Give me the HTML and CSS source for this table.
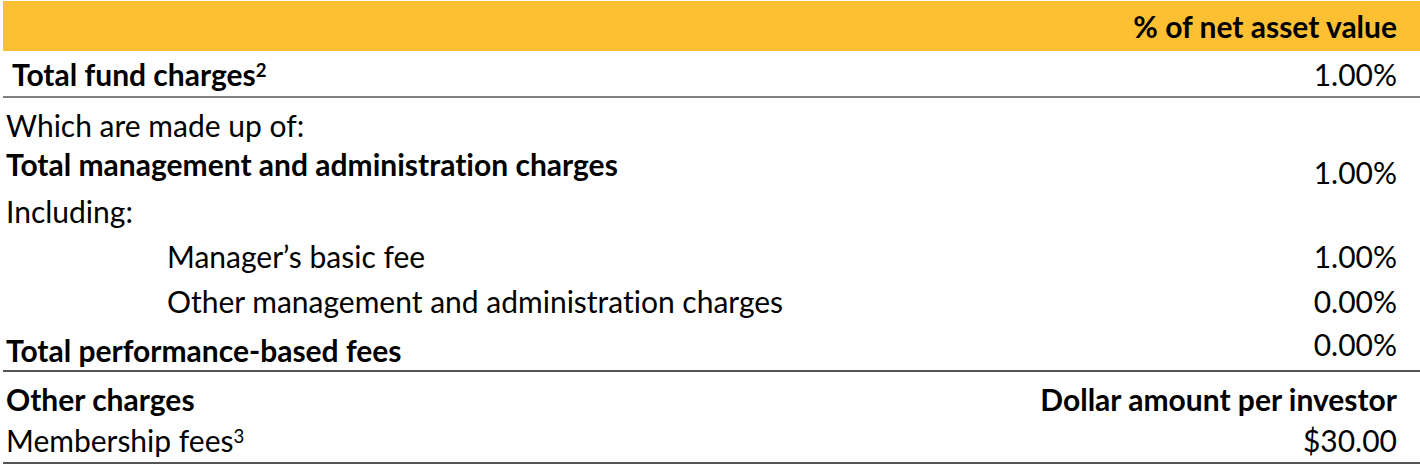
FILE: index.html
```html
<!DOCTYPE html>
<html lang="en">
<head>
<meta charset="utf-8">
<title>Fund charges</title>
<link rel="stylesheet" href="styles.css">
</head>
<body>
<div class="fees">
  <div class="row head">
    <div class="label"></div>
    <div class="value">% of net asset value</div>
  </div>
  <div class="row r-total rule-thick">
    <div class="label bold indent-space">Total fund charges<sup>2</sup></div>
    <div class="value">1.00%</div>
  </div>
  <div class="row r-which">
    <div class="label">Which are made up of:</div>
    <div class="value"></div>
  </div>
  <div class="row r-mgmt">
    <div class="label bold">Total management and administration charges</div>
    <div class="value">1.00%</div>
  </div>
  <div class="row r-incl">
    <div class="label">Including:</div>
    <div class="value"></div>
  </div>
  <div class="row r-basic">
    <div class="label sub">Manager’s basic fee</div>
    <div class="value">1.00%</div>
  </div>
  <div class="row r-other">
    <div class="label sub">Other management and administration charges</div>
    <div class="value">0.00%</div>
  </div>
  <div class="row r-perf rule">
    <div class="label bold">Total performance-based fees</div>
    <div class="value">0.00%</div>
  </div>
  <div class="row r-oc">
    <div class="label bold">Other charges</div>
    <div class="value bold">Dollar amount per investor</div>
  </div>
  <div class="row r-member rule">
    <div class="label">Membership fees<sup>3</sup></div>
    <div class="value">$30.00</div>
  </div>
</div>
</body>
</html>
```

FILE: styles.css
```css
html, body {
  margin: 0;
  padding: 0;
  background: #ffffff;
}

body {
  font-family: "Lato", "Open Sans", sans-serif;
  font-size: 30px;
  color: #000000;
  font-variant-ligatures: none;
  -webkit-font-smoothing: antialiased;
}

.fees {
  margin: 1px 0 0 3px;
  display: flex;
  flex-direction: column;
}

.row {
  display: grid;
  grid-template-columns: 1fr auto;
  padding-right: 23px;
  line-height: 36px;
  box-sizing: border-box;
}

.label {
  padding-left: 3px;
  white-space: nowrap;
}

.value {
  text-align: right;
  white-space: nowrap;
}

.bold {
  font-weight: 700;
}

.indent-space {
  padding-left: 9px;
}

.sub {
  padding-left: 164px;
}

sup {
  font-size: 0.62em;
  line-height: 0;
  vertical-align: 0.5em;
}

.bold sup {
  font-weight: 700;
}

.head {
  background: #fdc033;
  height: 50px;
  align-items: center;
  font-weight: 700;
}

.rule-thick {
  border-bottom: 2px solid #7f7f7f;
}

.rule {
  border-bottom: 2px solid #555555;
}

.r-total { height: 47px; padding-top: 5px; }
.r-which { height: 46px; padding-top: 9px; }
.r-mgmt { height: 44px; padding-top: 2px; }
.r-mgmt .value { padding-top: 8px; }
.r-incl { height: 46px; padding-top: 5px; }
.r-basic { height: 45px; padding-top: 4px; }
.r-other { height: 45px; padding-top: 4px; }
.r-perf { height: 48px; padding-top: 8px; }
.r-perf .value { margin-top: -6px; }
.r-oc { height: 47px; padding-top: 9px; }
.r-member { height: 45px; padding-top: 3px; }
```
